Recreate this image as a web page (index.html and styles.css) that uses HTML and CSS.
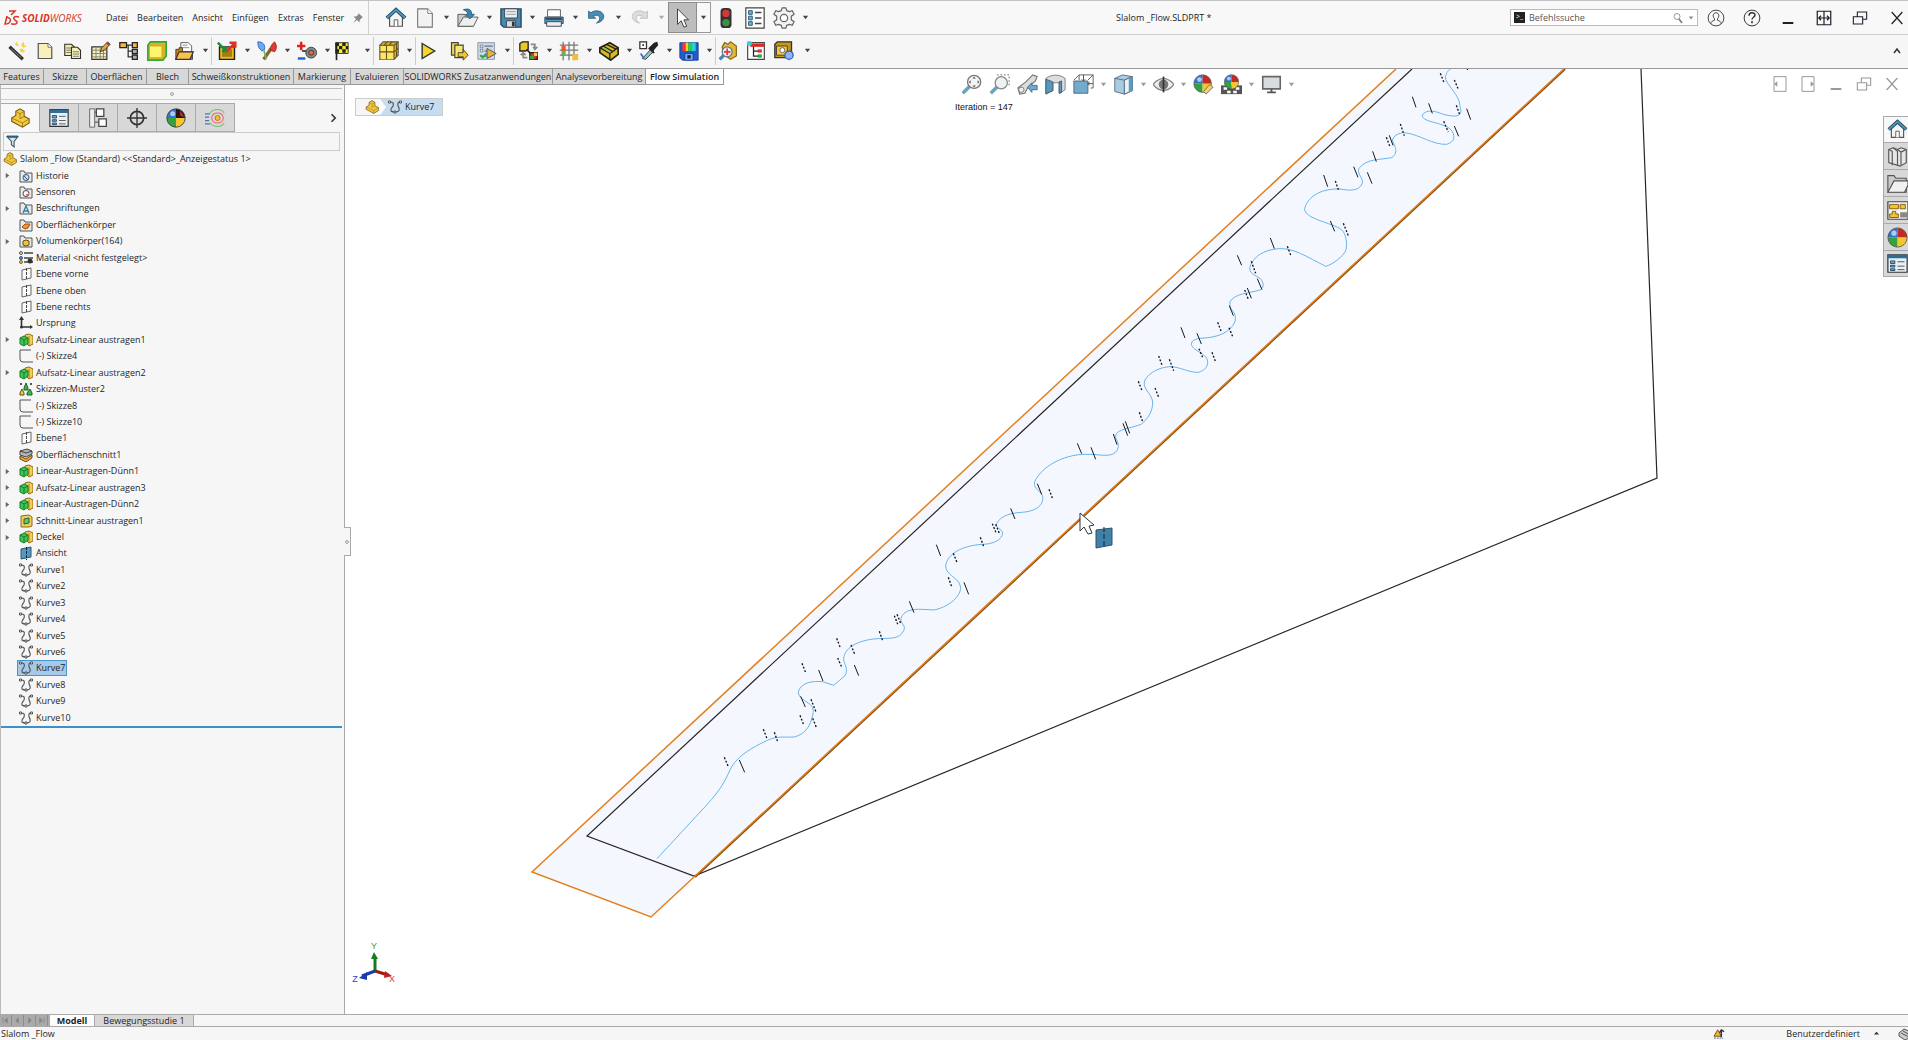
FILE: index.html
```html
<!DOCTYPE html>
<html lang="de">
<head>
<meta charset="utf-8">
<title>Slalom _Flow.SLDPRT *</title>
<link rel="stylesheet" href="styles.css">
</head>
<body>
<svg class="sprite" aria-hidden="true">
  <symbol id="arrow" viewBox="0 0 8 8"><path d="M1 2h6l-3 4z" fill="currentColor"/></symbol>
  <symbol id="home" viewBox="0 0 24 24"><path d="M5 11v10h14V11l-7-7z" fill="#f4f4f4" stroke="#555" stroke-width="1.3"/><path d="M10 21v-7h4v7" fill="#fff" stroke="#555"/><path d="M2 12 12 3l10 9" fill="none" stroke="#1d4763" stroke-width="4"/><path d="M2 12 12 3l10 9" fill="none" stroke="#5294ba" stroke-width="2"/></symbol>
  <symbol id="page" viewBox="0 0 24 24"><path d="M4 2h11l5 5v15H4z" fill="#f3f3f3" stroke="#777" stroke-width="1.2"/><path d="M15 2v5h5" fill="#fff" stroke="#777"/></symbol>
  <symbol id="open" viewBox="0 0 24 24"><path d="M1 21V8h7l2 3h7v10z" fill="#ccc" stroke="#555"/><path d="m1 21 6-10h16l-5 10z" fill="#eee" stroke="#555"/><path d="M7 3c6-2 9 0 9 5h3l-5 5-5-5h3c0-2-2-4-5-5z" fill="#3f86ae" stroke="#245a7c"/></symbol>
  <symbol id="save" viewBox="0 0 24 24"><path d="M1 2h22v20H4l-3-3z" fill="#4889ae" stroke="#2b4a5d" stroke-width="1.5"/><path d="M5 2h14v10H5z" fill="#eee" stroke="#345"/><path d="M7 5h10M7 8h10" stroke="#999"/><path d="M7 15h10v7H7z" fill="#ddd" stroke="#345"/><path d="M13 16h3v5h-3z" fill="#333"/></symbol>
  <symbol id="print" viewBox="0 0 24 24"><path d="M5 3h14v8H5z" fill="#fff" stroke="#555"/><path d="M2 11h20v7H2z" fill="#5a9bc0" stroke="#345"/><path d="M4 16h16v5H4z" fill="#eee" stroke="#345"/><path d="M3 13h18" stroke="#234" stroke-width="1.5"/></symbol>
  <symbol id="undo" viewBox="0 0 24 24"><path d="M2 4v9h9L8 10c5-2 9 0 8 4-1 3-3 4-4 5 6-1 10-5 9-10C19 3 10 2 5 6z" fill="#4a8db3" stroke="#28597a"/></symbol>
  <symbol id="redo" viewBox="0 0 24 24"><path d="M22 4v9h-9l3-3c-5-2-9 0-8 4 1 3 3 4 4 5-6-1-10-5-9-10C5 3 14 2 19 6z" fill="#ddd" stroke="#bbb"/></symbol>
  <symbol id="pointer" viewBox="0 0 24 24"><path d="M6 2v17l4-4 3 7 3-1-3-7h5z" fill="#fff" stroke="#333"/></symbol>
  <symbol id="traffic" viewBox="0 0 24 24"><rect x="6" y="1" width="12" height="22" rx="4" fill="#333"/><circle cx="12" cy="7" r="4" fill="#d33a33"/><circle cx="12" cy="17" r="4" fill="#3a9146"/></symbol>
  <symbol id="options" viewBox="0 0 24 24"><path d="M2 1h20v22H2z" fill="#fff" stroke="#444" stroke-width="1.3"/><path d="M5 4h4v4H5zM5 10h4v4H5zM5 16h4v4H5z" fill="#7db4d5" stroke="#1f526f"/><path d="M12 6h7M12 12h7M12 18h7" stroke="#444" stroke-width="1.5"/></symbol>
  <symbol id="gear" viewBox="0 0 24 24"><path d="m10 1h4l1 3 3 1 3-1 2 4-3 2v4l3 2-2 4-3-1-3 1-1 3h-4l-1-3-3-1-3 1-2-4 3-2v-4L1 8l2-4 3 1 3-1z" fill="#f2f2f2" stroke="#666" stroke-width="1.3"/><circle cx="12" cy="12" r="4" fill="#fff" stroke="#666" stroke-width="1.3"/></symbol>
  <symbol id="pin" viewBox="0 0 24 24"><path d="m13 2 9 9-3 1-4 5v4l-5-5-8 6 6-8-5-5h5l5-4z" fill="#888"/></symbol>
  <symbol id="user" viewBox="0 0 24 24"><circle cx="12" cy="12" r="10.500" fill="none" stroke="#444" stroke-width="1.3"/><path d="M5 20c0-4 3-4 5-5v-2c-3-3-2-8 2-8s5 5 2 8v2c2 1 5 1 5 5" fill="none" stroke="#444" stroke-width="1.300"/></symbol>
  <symbol id="help" viewBox="0 0 24 24"><circle cx="12" cy="12" r="10.500" fill="none" stroke="#333" stroke-width="1.300"/><path d="M8 9c0-5 8-5 8-1 0 3-4 3-4 6" fill="none" stroke="#333" stroke-width="2"/><path d="M11 16h2v3h-2z" fill="#333"/></symbol>
  <symbol id="min" viewBox="0 0 24 24"><path d="M4 18h16v3H4z" fill="currentColor"/></symbol>
  <symbol id="span" viewBox="0 0 24 24"><path d="M3 3h18v18H3zM12 3v18M5 12h14M8 9l-3 3 3 3M16 9l3 3-3 3" fill="none" stroke="currentColor" stroke-width="1.600"/></symbol>
  <symbol id="restore" viewBox="0 0 24 24"><path d="M2 10h14v11H2zM8 10V3h14v11h-6" fill="none" stroke="currentColor" stroke-width="1.600"/></symbol>
  <symbol id="close" viewBox="0 0 24 24"><path d="m4 3 16 18M20 3 4 21" fill="none" stroke="currentColor" stroke-width="1.800"/></symbol>
  <symbol id="pane-l" viewBox="0 0 24 24"><path d="M3 1h18v22H3z" fill="none" stroke="currentColor" stroke-width="1.500"/><path d="M8 8v8l-5-4z" fill="currentColor"/></symbol>
  <symbol id="pane-r" viewBox="0 0 24 24"><path d="M3 1h18v22H3z" fill="none" stroke="currentColor" stroke-width="1.500"/><path d="M16 8v8l5-4z" fill="currentColor"/></symbol>
  <symbol id="lens" viewBox="0 0 24 24"><circle cx="10" cy="9" r="6" fill="none" stroke="#777" stroke-width="1.500"/><path d="m14 14 6 8" stroke="#777" stroke-width="3"/></symbol>

  <symbol id="wand" viewBox="0 0 24 24"><path d="m3 7 16 15" stroke="#333" stroke-width="4"/><path d="m5 9 12 11" stroke="#888"/><path d="m10 3 2-2 1 3 2 1-3 1-2-1zM17 4l3-3 1 4 3 1-4 2-2-1zM15 10l3-1 4 3-3 2-3-1z" fill="#f0d64e"/></symbol>
  <symbol id="ypage" viewBox="0 0 24 24"><path d="M3 2h13l5 5v15H3z" fill="#f7f2bc" stroke="#555" stroke-width="1.600"/><path d="M16 2v5h5" fill="#fff" stroke="#555"/></symbol>
  <symbol id="copy" viewBox="0 0 24 24"><path d="M1 3h9l4 4v11H1z" fill="#f4eba8" stroke="#333" stroke-width="1.500"/><path d="M3 8h7M3 11h7M3 14h7" stroke="#555"/><path d="M10 7h8l4 4v11H10z" fill="#f7f2bc" stroke="#333" stroke-width="1.500"/><path d="M12 13h8M12 16h8M12 19h8" stroke="#555"/></symbol>
  <symbol id="tablepen" viewBox="0 0 24 24"><path d="M1 7h18v15H1z" fill="#f5eeb8" stroke="#333" stroke-width="1.500"/><path d="M1 11h18M1 15h18M1 19h18M6 8v14M11 8v14M15 8v14" stroke="#777"/><path d="m11 13 2-5 7-7 3 3-7 7z" fill="#e5a53c" stroke="#333"/><path d="m18 3 3 3 2-2-3-3z" fill="#a44"/></symbol>
  <symbol id="ftree" viewBox="0 0 24 24"><path d="M6 5h12M11 5v14h6M11 12h6" fill="none" stroke="#333" stroke-width="1.500"/><path d="M1 2h8v6H1z" fill="#f6b73a" stroke="#222" stroke-width="1.500"/><path d="M16 2h6v6h-6z" fill="#f6b73a" stroke="#222" stroke-width="1.500"/><path d="M16 10h6v5h-6zM16 17h6v5h-6z" fill="#aaa" stroke="#222" stroke-width="1.500"/></symbol>
  <symbol id="domain" viewBox="0 0 24 24"><path d="M1 5 4 1h19v17l-4 5H1z" fill="#d8b526" stroke="#2fa83f" stroke-width="2"/><path d="M3 6h15v14H3z" fill="#fdf46d" stroke="#d1a11e"/></symbol>
  <symbol id="yopen" viewBox="0 0 24 24"><path d="M7 2h9l4 4v8H7z" fill="#fff" stroke="#444"/><path d="M1 22V10h4v-2h4v5h12v9z" fill="#c77f18" stroke="#333"/><path d="m1 22 4-9h17l-4 9z" fill="#fac24b" stroke="#333" stroke-width="1.400"/><path d="M9 5h6M9 8h8" stroke="#777"/></symbol>
  <symbol id="bound" viewBox="0 0 24 24"><path d="M3 7h18v15H3z" fill="#eeb921" stroke="#222" stroke-width="1.700"/><path d="M6 10h12v9H6z" fill="#a57d10"/><path d="m1 2 9 9m-4 1h5V7" fill="none" stroke="#228a38" stroke-width="3"/><path d="m12 12 9-9m-6-1h7v6" fill="none" stroke="#dc3228" stroke-width="3"/></symbol>
  <symbol id="brushes" viewBox="0 0 24 24"><path d="M1 1c6 0 9 3 8 9l-3 2C2 9 1 6 1 1z" fill="#69aaf2" stroke="#2662b5"/><path d="m8 22 9-13" stroke="#7b6a25" stroke-width="4"/><path d="M16 11c-1-4 3-8 5-10 3 4 3 9 0 12z" fill="#e53a30" stroke="#922"/><path d="m8 10 3 12" stroke="#7a7" stroke-width="2"/></symbol>
  <symbol id="goal" viewBox="0 0 24 24"><path d="M5 1v10M0 6h10" stroke="#d22" stroke-width="3"/><path d="M1 21h9" stroke="#26c" stroke-width="3"/><path d="M6 12h8" stroke="#333" stroke-width="2"/><circle cx="17" cy="14" r="6.500" fill="#888" stroke="#333"/><circle cx="17" cy="14" r="3" fill="#f0623b" stroke="#333"/></symbol>
  <symbol id="flag" viewBox="0 0 24 24"><path d="M2 2h15v13H2z" fill="#f6eb36" stroke="#222"/><path d="M2 2h4v4H2zM10 2h4v4h-4zM6 6h4v4H6zM14 6h3v4h-3zM2 10h4v4H2zM10 10h4v4h-4z" fill="#222"/><path d="M3 2v21" stroke="#222" stroke-width="2"/></symbol>
  <symbol id="mesh" viewBox="0 0 24 24"><path d="M1 5 5 1h18v16l-5 5H1z" fill="#e2b52c" stroke="#555" stroke-width="1.300"/><path d="M2 6h16v16H2z" fill="#fbe667"/><path d="M1 5h17v17M18 5l5-4M9 5v17M1 13h17M18 13l5-4M10 1 6 5M16 1l-4 4M21 3v16" fill="none" stroke="#665014" stroke-width="1.300"/></symbol>
  <symbol id="play" viewBox="0 0 24 24"><path d="m5 3 15 9-15 9z" fill="#f3d629" stroke="#333" stroke-width="1.700"/></symbol>
  <symbol id="batch" viewBox="0 0 24 24"><path d="M3 2h8v15H3z" fill="#f1d849" stroke="#444" stroke-width="1.400"/><path d="M7 5h10v15H7z" fill="#f7e774" stroke="#444" stroke-width="1.400"/><path d="m11 14h6v-4l6 7-6 6v-4h-6z" fill="#f4c628" stroke="#333"/></symbol>
  <symbol id="solve" viewBox="0 0 24 24"><path d="M1 2h20v20H1z" fill="#c8dae8" stroke="#889"/><path d="M4 5h3v3H4zM4 10h3v3H4z" fill="#fff" stroke="#678"/><path d="M9 6h10M9 12h5M4 18h12" stroke="#678" stroke-width="1.500"/><path d="m4 17 3 3 4-5" stroke="#2a3" stroke-width="2" fill="none"/><path d="m12 9 11 6-11 6z" fill="#e5b43c" stroke="#444"/></symbol>
  <symbol id="convert" viewBox="0 0 24 24"><path d="M1 3 4 1h7v9l-3 2H1z" fill="#eac62a" stroke="#222" stroke-width="1.600"/><path d="M13 14h9v8h-9z" fill="#d33" stroke="#222" stroke-width="1.600"/><path d="M13 18h5v4h-5z" fill="#3a3"/><path d="M18 14h4v4h-4z" fill="#fc3"/><path d="M14 4h5v5m-2-2 2 3 3-3M10 20H5v-5m-3 2 3-3 3 3" fill="none" stroke="#888" stroke-width="2"/><path d="m9 10 5 5" stroke="#222" stroke-width="2"/></symbol>
  <symbol id="plotgrid" viewBox="0 0 24 24"><path d="M1 5h22M1 11h22M1 17h22M5 1v22M12 1v22M18 1v22" stroke="#777" stroke-width="1.500"/><path d="M3 6h5v6H3z" fill="#e55b2c"/><path d="M3 12h5v5H3z" fill="#62b84a"/><path d="M16 16h7v7h-7z" fill="#f5bf30"/></symbol>
  <symbol id="results" viewBox="0 0 24 24"><path d="m1 8 12-6 10 6v8l-9 7-13-9z" fill="#ddb91f" stroke="#222" stroke-width="2"/><path d="m1 8 12 7 10-7M13 15v7M5 6l12 7M9 4l12 6" fill="none" stroke="#222" stroke-width="1.600"/><path d="m5 9 8 5 2-1-8-5z" fill="#93c840"/></symbol>
  <symbol id="probe" viewBox="0 0 24 24"><path d="M1 1h8v8H1z" fill="#fff" stroke="#333" stroke-width="1.500"/><path d="M4 4h2v2H4z" fill="#333"/><path d="m4 21 11-12 3 3L8 22z" fill="#80c6c5" stroke="#333"/><path d="m13 7 5-5 4-1 1 4-6 7 2 2-2 1-6-6z" fill="#222"/><path d="m2 15 4 6" stroke="#36c" stroke-width="2"/></symbol>
  <symbol id="rainbow" viewBox="0 0 24 24"><path d="M1 2h22v21H4l-3-3z" fill="#215ccb" stroke="#123d93"/><path d="M4 2h4v10H4z" fill="#f33"/><path d="M8 2h3v10H8z" fill="#fc2"/><path d="M11 2h4v10h-4z" fill="#3c4"/><path d="M15 2h5v10h-5z" fill="#2bd3d0"/><path d="M7 15h10v8H7z" fill="#7aa7ee" stroke="#123d93"/><path d="M10 17h4v4h-4z" fill="#124"/></symbol>
  <symbol id="magbox" viewBox="0 0 24 24"><path d="m5 7 3-5 4 2 3-3 7 5v12l-7 4-8-6z" fill="#e8ba34" stroke="#8a6716" stroke-width="1.500"/><path d="m2 22 6-6" stroke="#4b84b8" stroke-width="4"/><circle cx="11" cy="13" r="6" fill="#e5eef6" stroke="#678" stroke-width="1.500"/><path d="M11 9v8M7 13h8" stroke="#e33" stroke-width="2"/></symbol>
  <symbol id="redtree" viewBox="0 0 24 24"><path d="M2 2h20v20H2z" fill="#fff" stroke="#444" stroke-width="1.400"/><path d="M5 3h17v4H5z" fill="#d62a20"/><path d="M9 7v11h6M9 12h6" fill="none" stroke="#222" stroke-width="1.500"/><path d="M14 10h5v4h-5z" fill="#d33"/><path d="M14 16h5v4h-5z" fill="#2a4"/><circle cx="4" cy="3" r="3" fill="#36cfe0"/></symbol>
  <symbol id="boxlens" viewBox="0 0 24 24"><path d="M1 4 4 1h17v15l-3 4H1z" fill="#c99718" stroke="#333" stroke-width="1.600"/><path d="M3 6h13v11H3z" fill="#f2cb3c" stroke="#333"/><circle cx="10" cy="11" r="3" fill="#fff" stroke="#555"/><circle cx="18" cy="17" r="5" fill="#8fb3f5" stroke="#2b5fc4" stroke-width="1.500"/></symbol>

  <symbol id="part" viewBox="0 0 24 24"><path d="m2 12 5-3 0-5 5-3 5 3v6l6 3v5l-8 5-13-7z" fill="#f3cb40" stroke="#7b5b12" stroke-width="1.300"/><path d="m2 12 13 6v5m0-5 8-5M7 4l5 3v6l5-3M12 7l5-3" fill="none" stroke="#9a7418"/></symbol>
  <symbol id="props" viewBox="0 0 24 24"><path d="M1 2h22v20H1z" fill="#e8f0f5" stroke="#333" stroke-width="1.400"/><path d="M1 2h22v4H1z" fill="#2f6d94"/><path d="M4 9h5v3H4zM4 14h5v2H4zM4 18h5v2H4z" fill="#69a9cf" stroke="#246" /><path d="M12 10h8M12 15h8M12 19h8" stroke="#444"/></symbol>
  <symbol id="config" viewBox="0 0 24 24"><path d="M8 5h4M8 17h6" fill="none" stroke="#666" stroke-width="1.500"/><path d="M2 1h6v22H2z" fill="#eee" stroke="#555"/><path d="M10 1h9v9h-9zM13 13h9v9h-9z" fill="#fff" stroke="#444" stroke-width="1.500"/></symbol>
  <symbol id="target" viewBox="0 0 24 24"><circle cx="12" cy="12" r="8" fill="none" stroke="#333" stroke-width="2"/><path d="M12 0v24M0 12h24" stroke="#333" stroke-width="1.600"/></symbol>
  <symbol id="ball" viewBox="0 0 24 24"><path d="M12 1A11 11 0 0 0 1 12h11z" fill="#3474c8"/><path d="M12 1a11 11 0 0 1 11 11H12z" fill="#c52b26"/><path d="M1 12a11 11 0 0 0 11 11V12z" fill="#35a23f"/><path d="M12 23a11 11 0 0 0 11-11H12z" fill="#f3c734"/><circle cx="8" cy="7" r="3" fill="#cbe2fb" opacity=".8"/><circle cx="12" cy="12" r="11" fill="none" stroke="#444" stroke-width=".8"/></symbol>
  <symbol id="darkball" viewBox="0 0 24 24"><path d="M12 1A11 11 0 0 0 1 12h11z" fill="#3474c8"/><path d="M12 1a11 11 0 0 1 11 11H12z" fill="#26161a"/><path d="M17 3l5 8-5-2z" fill="#c33"/><path d="M1 12a11 11 0 0 0 11 11V12z" fill="#35a23f"/><path d="M12 23a11 11 0 0 0 11-11H12z" fill="#f3c734"/><circle cx="8" cy="7" r="3" fill="#cbe2fb" opacity=".8"/><circle cx="12" cy="12" r="11" fill="none" stroke="#333"/></symbol>
  <symbol id="flow" viewBox="0 0 24 24"><path d="M0 7h6M0 11h5M0 15h5M0 19h6" stroke="#47b" stroke-width="1.500"/><path d="M8 12c1-8 13-8 14 0-1 8-13 8-14 0z" fill="none" stroke="#e66" stroke-width="1.300"/><path d="M6 6c5-6 14-5 17 0M6 18c5 6 14 5 17 0" fill="none" stroke="#7b7" stroke-width="1.300"/><circle cx="15" cy="12" r="3" fill="#f5c226" stroke="#a62"/></symbol>
  <symbol id="filter" viewBox="0 0 24 24"><path d="M2 3h20l-7 9v10l-5-4v-6z" fill="#d4e5ef" stroke="#456" stroke-width="2"/><path d="M2 3h20" stroke="#28617f" stroke-width="4"/></symbol>

  <symbol id="zoomfit" viewBox="0 0 24 24"><path d="m2 22 8-8" stroke="#6aa2c2" stroke-width="4"/><circle cx="15" cy="9" r="7.500" fill="#f4f4f4" stroke="#777" stroke-width="1.500"/><path d="m15 3 2 2h-4zM15 15l2-2h-4zM9 9l2-2v4zM21 9l-2-2v4z" fill="#555"/></symbol>
  <symbol id="zoomarea" viewBox="0 0 24 24"><path d="M9 1h14v13" fill="none" stroke="#666" stroke-dasharray="2 2"/><path d="m2 22 8-8" stroke="#6aa2c2" stroke-width="4"/><circle cx="14" cy="10" r="7" fill="#edf2f5" stroke="#888" stroke-width="1.500"/></symbol>
  <symbol id="prevview" viewBox="0 0 24 24"><path d="m1 16 9-7 8-8 5 2-2 5-9 8-3 6-6 1z" fill="#ddd" stroke="#777" stroke-width="1.300"/><circle cx="5" cy="18" r="3" fill="#eee" stroke="#777"/><path d="m12 15 5-5v3h6v5h-6v3z" fill="#70a9ce" stroke="#468"/></symbol>
  <symbol id="section" viewBox="0 0 24 24"><path d="M1 5c7-5 15-5 22 0v13l-6 4V10H9v9l-8 3z" fill="#ddd" stroke="#777"/><path d="m1 6 8 3v10l-8 4zM16 9l3-1v13l-3 1z" fill="#5797bd" stroke="#456"/></symbol>
  <symbol id="orient" viewBox="0 0 24 24"><path d="M7 1h16v15h-3M23 1l-6 6M7 1v6M7 1 1 7" fill="none" stroke="#555"/><path d="M1 8h16v14H1z" fill="#72abce" stroke="#467"/><path d="M12 1v7m-2-2 2 2 2-2M23 11h-6m2-2-2 2 2 2" fill="none" stroke="#444"/></symbol>
  <symbol id="display" viewBox="0 0 24 24"><path d="m2 5 9-4 11 2v16l-9 4-11-3z" fill="#a9cce2" stroke="#567"/><path d="m2 5 11 2 9-4M13 7v16" fill="none" stroke="#567"/><path d="M13 7 22 3v16l-9 4z" fill="#e7f2f9" stroke="#567"/><path d="m18 5 4-2v16l-4 2z" fill="#5d9cc2"/></symbol>
  <symbol id="eye" viewBox="0 0 24 24"><path d="M0 12c7-9 17-9 24 0-7 9-17 9-24 0z" fill="#eee" stroke="#888" stroke-width="1.500"/><circle cx="12" cy="12" r="5.500" fill="#777"/><path d="M12 3v18" stroke="#333" stroke-width="2"/></symbol>
  <symbol id="appear" viewBox="0 0 24 24"><use href="#ball" width="22" height="22"/><path d="m12 20 7-8 4 3-8 8z" fill="#ecd086" stroke="#765"/></symbol>
  <symbol id="scene" viewBox="0 0 24 24"><path d="M0 13h24v10H0z" fill="#555"/><path d="M3 15h4v3H3zM17 15h4v3h-4zM7 19h4v3H7zM14 19h4v3h-4z" fill="#fff"/><use href="#ball" x="3" width="18" height="18"/></symbol>
  <symbol id="screen" viewBox="0 0 24 24"><path d="M2 3h20v14H2z" fill="#d8dcde" stroke="#666" stroke-width="1.800"/><path d="M11 17h2v4h-2zM7 20h10v2H7z" fill="#555"/></symbol>

  <symbol id="books" viewBox="0 0 24 24"><path d="m2 4 5-2 5 2 4-2 6 2v15l-7 4-13-4z" fill="#e6e6e6" stroke="#555" stroke-width="1.300"/><path d="m2 4 4 2v16M7 2l5 4v16M12 4l4 3v15M16 7l6-3" fill="none" stroke="#555" stroke-width="1.300"/></symbol>
  <symbol id="folder" viewBox="0 0 24 24"><path d="M1 22V3h7l2 3h12v16z" fill="#ccc" stroke="#555" stroke-width="1.300"/><path d="m1 22 7-13h16v5l-4 8z" fill="#f1f1f1" stroke="#555" stroke-width="1.300"/></symbol>
  <symbol id="palette" viewBox="0 0 24 24"><path d="M1 2h23v20H1z" fill="#f4f4f4" stroke="#444" stroke-width="1.400"/><path d="M3 5h10v5H3zM15 5h6v5h-6zM6 13h4v3h3v4H3v-4h3z" fill="#f2c52d" stroke="#765512"/><path d="M15 14h9v6h-9z" fill="#888"/></symbol>

  <symbol id="t-folder" viewBox="0 0 14 14"><path d="M1 13V2h4l1 2h7v9z" fill="#e8eaeb" stroke="#555"/></symbol>
  <symbol id="t-history" viewBox="0 0 14 14"><use href="#t-folder"/><circle cx="7" cy="8.500" r="3" fill="#cfe3ef" stroke="#357"/><path d="m5 7 4 4" stroke="#357"/></symbol>
  <symbol id="t-sensor" viewBox="0 0 14 14"><use href="#t-folder"/><circle cx="7" cy="8.500" r="3" fill="#fff" stroke="#444"/><path d="M7 9h3l-2 3z" fill="#e54"/></symbol>
  <symbol id="t-note" viewBox="0 0 14 14"><use href="#t-folder"/><path d="m4 12 3-7 3 7M5 10h4" fill="none" stroke="#3a7ca4" stroke-width="1.300"/></symbol>
  <symbol id="t-surf" viewBox="0 0 14 14"><use href="#t-folder"/><path d="m3 9 3-3h5l-2 4-3 1z" fill="#f29134" stroke="#a4520e"/></symbol>
  <symbol id="t-solid" viewBox="0 0 14 14"><use href="#t-folder"/><path d="m4 7 3-1 3 1v4l-3 1-3-1z" fill="#f0c537" stroke="#664d12"/></symbol>
  <symbol id="t-mat" viewBox="0 0 14 14"><path d="M5 2h9M5 7h9M5 11h9" stroke="#444" stroke-width="1.500"/><circle cx="2" cy="2" r="1.500" fill="#ddd" stroke="#555"/><circle cx="2" cy="7" r="1.500" fill="#4b9bd0" stroke="#357"/><circle cx="2" cy="11" r="1.500" fill="#edc33b" stroke="#763"/><circle cx="11" cy="10" r="2.500" fill="#333"/></symbol>
  <symbol id="t-plane" viewBox="0 0 14 14"><path d="m3 3 9-2v10l-9 2z" fill="#fafafa" stroke="#666"/><path d="M7.500 1v12" stroke="#444" stroke-dasharray="3 1"/></symbol>
  <symbol id="t-plane-on" viewBox="0 0 14 14"><path d="m2 3 10-2v10L2 13z" fill="#5796bd" stroke="#285a78"/><path d="M7.500 1v13" stroke="#123" stroke-dasharray="3 1"/></symbol>
  <symbol id="t-origin" viewBox="0 0 14 14"><path d="M2.500 2v9H12" fill="none" stroke="#333" stroke-width="1.600"/><path d="m0 4 2.500-4L5 4zM11 9l3 2-3 2z" fill="#333"/><circle cx="2.500" cy="11" r="1.500" fill="#333"/></symbol>
  <symbol id="t-boss" viewBox="0 0 14 14"><path d="m6 2 4-1 4 2v8l-4 2-3-3z" fill="#f2cf58" stroke="#8c6a1c"/><path d="M10 3v9" stroke="#a57e20"/><path d="m1 5 4-2 4 2v5l-4 3-4-2z" fill="#3cc852" stroke="#1b7a2b"/><path d="m1 5 4 2 4-2M5 7v5" fill="none" stroke="#1b7a2b"/></symbol>
  <symbol id="t-cut" viewBox="0 0 14 14"><path d="m2 2 8-1 3 2v9l-3 1H2z" fill="#f2cf58" stroke="#8c6a1c"/><path d="m5 5 5-1v5l-5 1z" fill="#65c56c" stroke="#276331"/></symbol>
  <symbol id="t-sketch" viewBox="0 0 14 14"><path d="M12 1H1v9q0 3 3 3h10" fill="none" stroke="#555"/></symbol>
  <symbol id="t-pattern" viewBox="0 0 14 14"><path d="M5 6 7 1l2 5v2H5zM8 13v-2l3-4 2 4v2z" fill="#3ab44b" stroke="#1c6427"/><path d="M1 13v-2l2-4 2 4v2z" fill="#f0cf46" stroke="#5a4d14"/><path d="M1 2h2M11 2h2" stroke="#555" stroke-width="2"/></symbol>
  <symbol id="t-surfcut" viewBox="0 0 14 14"><path d="m1 8 6 3 6-4v3l-6 4-6-3z" fill="#f2a53a" stroke="#6e4410"/><path d="m1 3 7-2 5 2v3l-6 3-6-2z" fill="#b4b4b4" stroke="#444"/><path d="m1 3 6 2 6-2" fill="none" stroke="#444"/></symbol>
  <symbol id="t-curve" viewBox="0 0 14 14"><path d="M2 2c3 0 4 1 3 4-1 2-3 3-2 5 1 1 2 1 4 1 3 0 5-1 4-4-1-2-2-5 0-6h2" fill="none" stroke="#555" stroke-width="1.200"/><path d="M.5 1h2v2h-2zM11.500 1h2v2h-2zM6 11h2v2H6z" fill="#fff" stroke="#555"/></symbol>
  <symbol id="t-exp" viewBox="0 0 8 8"><path d="m2 1 4 3-4 3z" fill="#666"/></symbol>
  <symbol id="warn" viewBox="0 0 14 12"><path d="m1 9 4-7 4 7z" fill="#f4b82c" stroke="#774b0a"/><path d="M9 10V3m-2 2 2-3 3 2" fill="none" stroke="#333" stroke-width="1.500"/><path d="M1 11h10" stroke="#36a" stroke-dasharray="2 1"/></symbol>
</svg>

<header class="titlebar">
  <div class="logo">
    <svg viewBox="0 0 16 16" aria-hidden="true"><g fill="none" stroke="#d9352a" stroke-width="1.500"><path d="M5 1h6L7 5"/><path d="m3 6-2 8c6 0 8-6 1-7M15 7c-4-1-6 0-5 2s4 2 3 4-4 1-6 1"/></g></svg>
    <span><b>SOLID</b>WORKS</span>
  </div>
  <nav class="menus">
    <button>Datei</button><button>Bearbeiten</button><button>Ansicht</button><button>Einfügen</button><button>Extras</button><button>Fenster</button>
  </nav>
  <button class="pin" aria-label="Anheften"><svg><use href="#pin"/></svg></button>
  <div class="quick">
    <button aria-label="Start"><svg><use href="#home"/></svg></button>
    <button aria-label="Neu"><svg><use href="#page"/></svg></button><button class="drop" aria-label="Mehr"><svg><use href="#arrow"/></svg></button>
    <button aria-label="Öffnen"><svg><use href="#open"/></svg></button><button class="drop" aria-label="Mehr"><svg><use href="#arrow"/></svg></button>
    <button aria-label="Speichern"><svg><use href="#save"/></svg></button><button class="drop" aria-label="Mehr"><svg><use href="#arrow"/></svg></button>
    <button aria-label="Drucken"><svg><use href="#print"/></svg></button><button class="drop" aria-label="Mehr"><svg><use href="#arrow"/></svg></button>
    <button aria-label="Rückgängig"><svg class="small"><use href="#undo"/></svg></button><button class="drop" aria-label="Mehr"><svg><use href="#arrow"/></svg></button>
    <button aria-label="Wiederholen"><svg class="small"><use href="#redo"/></svg></button><button class="drop off" aria-label="Mehr"><svg><use href="#arrow"/></svg></button>
    <button class="pressed" aria-label="Auswählen"><svg><use href="#pointer"/></svg></button><button class="drop boxed" aria-label="Mehr"><svg><use href="#arrow"/></svg></button>
    <button aria-label="Neu aufbauen"><svg><use href="#traffic"/></svg></button>
    <button aria-label="Dateieigenschaften"><svg><use href="#options"/></svg></button>
    <button aria-label="Optionen"><svg><use href="#gear"/></svg></button><button class="drop" aria-label="Mehr"><svg><use href="#arrow"/></svg></button>
  </div>
  <h1 class="doc-title">Slalom _Flow.SLDPRT *</h1>
  <div class="title-right">
    <label class="search"><span class="prompt">&gt;_</span><input type="text" placeholder="Befehlssuche" aria-label="Befehlssuche"><svg><use href="#lens"/></svg><svg class="tiny"><use href="#arrow"/></svg></label>
    <button aria-label="Anmelden"><svg><use href="#user"/></svg></button>
    <button aria-label="Hilfe"><svg><use href="#help"/></svg></button>
    <button aria-label="Minimieren"><svg class="small"><use href="#min"/></svg></button>
    <button aria-label="Spannen"><svg><use href="#span"/></svg></button>
    <button aria-label="Wiederherstellen"><svg class="small"><use href="#restore"/></svg></button>
    <button aria-label="Schließen"><svg class="small"><use href="#close"/></svg></button>
  </div>
</header>

<div class="toolbar">
  <button aria-label="Assistent"><svg><use href="#wand"/></svg></button>
  <button aria-label="Neu"><svg class="small"><use href="#ypage"/></svg></button>
  <button aria-label="Projekt klonen"><svg class="small"><use href="#copy"/></svg></button>
  <button aria-label="Allgemeine Einstellungen"><svg><use href="#tablepen"/></svg></button>
  <button aria-label="Baum"><svg><use href="#ftree"/></svg></button>
  <button aria-label="Rechenraum"><svg><use href="#domain"/></svg></button>
  <button aria-label="Projekt laden"><svg><use href="#yopen"/></svg></button><button class="drop" aria-label="Mehr"><svg><use href="#arrow"/></svg></button>
  <i class="sep"></i>
  <button aria-label="Randbedingung"><svg><use href="#bound"/></svg></button><button class="drop" aria-label="Mehr"><svg><use href="#arrow"/></svg></button>
  <button aria-label="Quellen"><svg><use href="#brushes"/></svg></button><button class="drop" aria-label="Mehr"><svg><use href="#arrow"/></svg></button>
  <button aria-label="Bedingungen"><svg><use href="#goal"/></svg></button><button class="drop" aria-label="Mehr"><svg><use href="#arrow"/></svg></button>
  <button class="start" aria-label="Ziele"><svg><use href="#flag"/></svg></button><button class="drop" aria-label="Mehr"><svg><use href="#arrow"/></svg></button>
  <i class="sep"></i>
  <button aria-label="Netz"><svg><use href="#mesh"/></svg></button><button class="drop" aria-label="Mehr"><svg><use href="#arrow"/></svg></button>
  <i class="sep"></i>
  <button class="start" aria-label="Ausführen"><svg><use href="#play"/></svg></button>
  <button aria-label="Stapellauf"><svg><use href="#batch"/></svg></button>
  <button aria-label="Löser"><svg><use href="#solve"/></svg></button><button class="drop" aria-label="Mehr"><svg><use href="#arrow"/></svg></button>
  <i class="sep"></i>
  <button aria-label="Ergebnisse laden"><svg><use href="#convert"/></svg></button><button class="drop" aria-label="Mehr"><svg><use href="#arrow"/></svg></button>
  <button aria-label="Schnittbild"><svg><use href="#plotgrid"/></svg></button><button class="drop" aria-label="Mehr"><svg><use href="#arrow"/></svg></button>
  <button aria-label="Oberflächenbild"><svg><use href="#results"/></svg></button><button class="drop" aria-label="Mehr"><svg><use href="#arrow"/></svg></button>
  <button aria-label="Prüfen"><svg><use href="#probe"/></svg></button><button class="drop" aria-label="Mehr"><svg><use href="#arrow"/></svg></button>
  <button aria-label="Ergebnis speichern"><svg><use href="#rainbow"/></svg></button><button class="drop" aria-label="Mehr"><svg><use href="#arrow"/></svg></button>
  <i class="sep"></i>
  <button class="start" aria-label="Geometrie prüfen"><svg><use href="#magbox"/></svg></button>
  <button class="start" aria-label="Leckverfolgung"><svg><use href="#redtree"/></svg></button>
  <button class="start" aria-label="Anzeige"><svg><use href="#boxlens"/></svg></button><button class="drop" aria-label="Mehr"><svg><use href="#arrow"/></svg></button>
  <button class="collapse" aria-label="Einklappen"><svg viewBox="0 0 8 8"><path d="m1 6 3-4 3 4" fill="none" stroke="#333" stroke-width="1.500"/></svg></button>
</div>

<main class="workspace">
  <svg class="model" role="img" aria-label="Slalom-Strecke">
    <g transform="translate(0 -69)">
      <path class="face" d="M1396 69 532 872l119 45 913-848z"/>
      <path class="edge" d="m1412 69-825 767 107 40 963-398-16-409"/>
      <path class="edge under" d="M695 877 1565 69"/>
      <path class="hot" d="M1396 69 532 872l119 45 913-848"/>
      <g transform="translate(520 570) scale(.33333)">
        <path class="curve" d="M411 866 560 705C600 660 612 640 630 600c15-30 40-55 112-89 33-15 58-8 81-10 32-9 45-31 51-51 8-25 8-35-2-45-17-15-37-20-37-40 10-30 45-32 73-30l33 11 34-29c10-17 0-32-4-47-1-30 29-55 89-63 40-4 70 3 86-17 19-25-6-25-3-45 7-25 37-28 62-27l38 2"/>
        <path class="gate" d="m896 300 13 33M1003 285l13 32M842 379l14 32M658 570l16 37"/>
        <path class="gate dash" d="m950 205 11 28M993 225l11 27M1078 184l10 28M953 264l13 29M846 280l11 28M873 388l15 38M840 436l11 28M878 445l11 27M730 478l12 30M763 487l10 28M613 562l12 28"/>
      </g>
      <g transform="translate(880 340) scale(.33333)">
        <path class="curve" d="M163 810C215 798 250 760 240 735 232 710 195 705 197 675 205 640 245 618 305 613 340 613 365 600 368 580 366 565 345 565 350 550 365 525 395 519 425 517 460 515 492 500 488 470 482 450 460 450 464 425 480 390 530 350 605 343L640 343C680 348 710 350 715 320 716 300 700 295 710 280 725 264 760 264 785 252 815 225 820 200 817 180 810 155 785 145 795 120 810 95 840 82 870 80 900 80 925 98 955 97 975 93 987 75 982 60 975 35 925 30 936 5 940 0 950-4 960-5"/>
        <path class="gate" d="m592 310 13 31M633 322l14 36M700 282l11 32M729 250l14 37M736 244l13 36M472 431l13 32M392 505l13 32M169 614l13 34M252 727l14 36M88 784l14 34M951-20l13 32M903-38l12 32"/>
        <path class="gate dash" d="m836 48 11 30M868 58l13 34M775 124l11 28M825 144l12 30M778 217l10 28M957 26l12 29M996 37l11 29M507 448l11 28M337 551l11 27M347 553l11 27M301 592l10 28M220 640l11 27M205 712l10 28M43 827l11 28M51 823l12 29"/>
      </g>
      <g transform="translate(1200 60) scale(.33333)">
        <path class="curve" d="M0 835C50 833 90 820 105 785 112 750 85 755 90 725 105 700 145 700 180 690 195 680 190 665 180 655 165 645 145 640 150 620 160 590 190 570 235 566 280 563 320 590 377 619 395 615 430 590 438 570 442 545 438 530 430 515 415 490 310 480 314 445 325 405 370 385 420 387 450 392 475 395 487 370 490 350 470 345 477 325 500 295 540 300 575 293 600 275 580 255 577 240 585 220 605 217 620 219 660 225 700 255 740 253 765 245 765 230 757 215 740 185 665 190 667 165 680 145 710 155 730 163 770 173 790 170 780 140 780 100 725 65 738 45 742 32 748 30 752 27"/>
        <path class="gate" d="m637 110 11 32M686 130l11 30M800 146l12 33M763 198l13 31M518 274l11 31M461 320l13 32M502 337l14 34M371 345l12 35M391 483l13 31M211 534l12 32M112 586l13 30M172 656l14 33M142 684l12 31M88 737l12 30M568 226l11 30"/>
        <path class="gate dash" d="m721 40 12 30M763 60l12 28M769 136l10 28M731 184l14 32M601 192l12 35M559 232l11 28M406 363l10 29M430 490l15 37M262 559l10 26M154 604l13 36M134 690l11 28M53 787l11 28M87 803l11 27M801 24l3 9"/>
      </g>
      <g stroke-width="3"><path d="M375 971V958" stroke="#187a22"/><path d="m375 971 13 4" stroke="#9c1c14"/><path d="m375 971-13 5" stroke="#1c3ca8"/></g>
      <path d="m371 959 3-7 4 7z" fill="#187a22"/><path d="m385 971 7 5-8 2z" fill="#c22016"/><path d="m367 972-8 6 8 2z" fill="#1c3ca8"/>
      <g class="axis" text-anchor="middle"><text x="374" y="949" fill="#4a9a4a">Y</text><text x="392" y="982" fill="#e03a30">X</text><text x="355" y="982" fill="#2846c0">Z</text></g>
      <path d="m1096 530 16-2v17l-16 3z" fill="#3f81a8" stroke="#28556f"/><path d="M1104 527v21" stroke="#123" stroke-dasharray="5 2"/>
      <path d="M1080 513v18l4-4 4 7 4-1-3-7 5-1z" fill="#fff" stroke="#333"/>
    </g>
  </svg>

  <nav class="ribbon">
    <button>Features</button><button>Skizze</button><button>Oberflächen</button><button>Blech</button><button>Schweißkonstruktionen</button><button>Markierung</button><button>Evaluieren</button><button>SOLIDWORKS Zusatzanwendungen</button><button>Analysevorbereitung</button><button class="active">Flow Simulation</button>
  </nav>

  <div class="split">
    <aside class="panel">
      <div class="grip"><i></i></div>
      <div class="panel-tabs">
        <button class="active" aria-label="FeatureManager"><svg><use href="#part"/></svg></button>
        <button aria-label="PropertyManager"><svg><use href="#props"/></svg></button>
        <button aria-label="ConfigurationManager"><svg><use href="#config"/></svg></button>
        <button aria-label="DimXpert"><svg><use href="#target"/></svg></button>
        <button aria-label="DisplayManager"><svg><use href="#darkball"/></svg></button>
        <button aria-label="Flow Simulation"><svg><use href="#flow"/></svg></button>
        <button class="more" aria-label="Weitere"><svg viewBox="0 0 8 8"><path d="m2 1 3 3-3 3" fill="none" stroke="#333" stroke-width="1.300"/></svg></button>
      </div>
      <label class="filter"><svg><use href="#filter"/></svg><input type="text" aria-label="Filter"></label>
      <ul class="tree">
        <li class="root"><svg><use href="#part"/></svg><span>Slalom _Flow (Standard) &lt;&lt;Standard&gt;_Anzeigestatus 1&gt;</span></li>
        <li class="exp"><svg class="x"><use href="#t-exp"/></svg><span class="item"><svg><use href="#t-history"/></svg>Historie</span></li>
        <li><span class="item"><svg><use href="#t-sensor"/></svg>Sensoren</span></li>
        <li class="exp"><svg class="x"><use href="#t-exp"/></svg><span class="item"><svg><use href="#t-note"/></svg>Beschriftungen</span></li>
        <li><span class="item"><svg><use href="#t-surf"/></svg>Oberflächenkörper</span></li>
        <li class="exp"><svg class="x"><use href="#t-exp"/></svg><span class="item"><svg><use href="#t-solid"/></svg>Volumenkörper(164)</span></li>
        <li><span class="item"><svg><use href="#t-mat"/></svg>Material &lt;nicht festgelegt&gt;</span></li>
        <li><span class="item"><svg><use href="#t-plane"/></svg>Ebene vorne</span></li>
        <li><span class="item"><svg><use href="#t-plane"/></svg>Ebene oben</span></li>
        <li><span class="item"><svg><use href="#t-plane"/></svg>Ebene rechts</span></li>
        <li><span class="item"><svg><use href="#t-origin"/></svg>Ursprung</span></li>
        <li class="exp"><svg class="x"><use href="#t-exp"/></svg><span class="item"><svg><use href="#t-boss"/></svg>Aufsatz-Linear austragen1</span></li>
        <li><span class="item"><svg><use href="#t-sketch"/></svg>(-) Skizze4</span></li>
        <li class="exp"><svg class="x"><use href="#t-exp"/></svg><span class="item"><svg><use href="#t-boss"/></svg>Aufsatz-Linear austragen2</span></li>
        <li><span class="item"><svg><use href="#t-pattern"/></svg>Skizzen-Muster2</span></li>
        <li><span class="item"><svg><use href="#t-sketch"/></svg>(-) Skizze8</span></li>
        <li><span class="item"><svg><use href="#t-sketch"/></svg>(-) Skizze10</span></li>
        <li><span class="item"><svg><use href="#t-plane"/></svg>Ebene1</span></li>
        <li><span class="item"><svg><use href="#t-surfcut"/></svg>Oberflächenschnitt1</span></li>
        <li class="exp"><svg class="x"><use href="#t-exp"/></svg><span class="item"><svg><use href="#t-boss"/></svg>Linear-Austragen-Dünn1</span></li>
        <li class="exp"><svg class="x"><use href="#t-exp"/></svg><span class="item"><svg><use href="#t-boss"/></svg>Aufsatz-Linear austragen3</span></li>
        <li class="exp"><svg class="x"><use href="#t-exp"/></svg><span class="item"><svg><use href="#t-boss"/></svg>Linear-Austragen-Dünn2</span></li>
        <li class="exp"><svg class="x"><use href="#t-exp"/></svg><span class="item"><svg><use href="#t-cut"/></svg>Schnitt-Linear austragen1</span></li>
        <li class="exp"><svg class="x"><use href="#t-exp"/></svg><span class="item"><svg><use href="#t-boss"/></svg>Deckel</span></li>
        <li><span class="item"><svg><use href="#t-plane-on"/></svg>Ansicht</span></li>
        <li><span class="item"><svg><use href="#t-curve"/></svg>Kurve1</span></li>
        <li><span class="item"><svg><use href="#t-curve"/></svg>Kurve2</span></li>
        <li><span class="item"><svg><use href="#t-curve"/></svg>Kurve3</span></li>
        <li><span class="item"><svg><use href="#t-curve"/></svg>Kurve4</span></li>
        <li><span class="item"><svg><use href="#t-curve"/></svg>Kurve5</span></li>
        <li><span class="item"><svg><use href="#t-curve"/></svg>Kurve6</span></li>
        <li><span class="item selected"><svg><use href="#t-curve"/></svg>Kurve7</span></li>
        <li><span class="item"><svg><use href="#t-curve"/></svg>Kurve8</span></li>
        <li><span class="item"><svg><use href="#t-curve"/></svg>Kurve9</span></li>
        <li><span class="item"><svg><use href="#t-curve"/></svg>Kurve10</span></li>
      </ul>
      <button class="handle" aria-label="Bereich einklappen"><i></i></button>
    </aside>

    <section class="view">
      <div class="crumbs"><span class="crumb-part"><svg><use href="#part"/></svg></span><span class="crumb-item"><svg><use href="#t-curve"/></svg>Kurve7</span></div>
    </section>
  </div>

  <div class="headsup">
    <div class="hud-icons">
      <button aria-label="Zoomen auf Fenster"><svg><use href="#zoomfit"/></svg></button>
      <button aria-label="Bereich vergrößern"><svg><use href="#zoomarea"/></svg></button>
      <button aria-label="Vorherige Ansicht"><svg><use href="#prevview"/></svg></button>
      <button aria-label="Schnittansicht"><svg><use href="#section"/></svg></button>
      <button aria-label="Ausrichtung"><svg><use href="#orient"/></svg></button><button class="drop" aria-label="Mehr"><svg><use href="#arrow"/></svg></button>
      <button aria-label="Anzeigeart"><svg><use href="#display"/></svg></button><button class="drop" aria-label="Mehr"><svg><use href="#arrow"/></svg></button>
      <button aria-label="Ausblenden"><svg><use href="#eye"/></svg></button><button class="drop" aria-label="Mehr"><svg><use href="#arrow"/></svg></button>
      <button aria-label="Erscheinungsbild"><svg><use href="#appear"/></svg></button>
      <button aria-label="Bühne"><svg><use href="#scene"/></svg></button><button class="drop" aria-label="Mehr"><svg><use href="#arrow"/></svg></button>
      <button aria-label="Ansichtseinstellungen"><svg><use href="#screen"/></svg></button><button class="drop" aria-label="Mehr"><svg><use href="#arrow"/></svg></button>
    </div>
    <p>Iteration = 147</p>
  </div>

  <div class="doc-buttons">
    <button aria-label="Links"><svg><use href="#pane-l"/></svg></button>
    <button aria-label="Rechts"><svg><use href="#pane-r"/></svg></button>
    <button aria-label="Minimieren"><svg><use href="#min"/></svg></button>
    <button aria-label="Wiederherstellen"><svg><use href="#restore"/></svg></button>
    <button aria-label="Schließen"><svg><use href="#close"/></svg></button>
  </div>

  <div class="taskpane">
    <button class="active" aria-label="Ressourcen"><svg><use href="#home"/></svg></button>
    <button aria-label="Bibliothek"><svg><use href="#books"/></svg></button>
    <button aria-label="Datei-Explorer"><svg><use href="#folder"/></svg></button>
    <button aria-label="Ansichtspalette"><svg><use href="#palette"/></svg></button>
    <button aria-label="Erscheinungsbilder"><svg><use href="#ball"/></svg></button>
    <button aria-label="Eigenschaften"><svg><use href="#props"/></svg></button>
  </div>
</main>

<footer>
  <div class="sheets">
    <div class="sheet-nav">
      <button aria-label="Erste"><svg viewBox="0 0 8 8"><path d="M1 1v6M6 1v6L3 4z"/></svg></button><button aria-label="Zurück"><svg viewBox="0 0 8 8"><path d="M5 1v6L2 4z"/></svg></button><button aria-label="Vor"><svg viewBox="0 0 8 8"><path d="M3 1v6l3-3z"/></svg></button><button aria-label="Letzte"><svg viewBox="0 0 8 8"><path d="M2 1v6l3-3zM7 1v6"/></svg></button>
    </div>
    <button class="active">Modell</button><button>Bewegungsstudie 1</button>
  </div>
  <div class="status">
    <span>Slalom _Flow</span>
    <svg class="warn"><use href="#warn"/></svg>
    <button class="units">Benutzerdefiniert <svg viewBox="0 0 8 8"><path d="M1 5h6L4 2z" fill="#333"/></svg></button>
    <svg class="tag" viewBox="0 0 14 12"><path d="m1 5 5-4 7 3v5l-6 3-6-4z" fill="#ccc" stroke="#555"/><path d="m3 5 8 4M5 3l7 4" stroke="#555"/></svg>
  </div>
</footer>
</body>
</html>
```

FILE: styles.css
```css
* { box-sizing: border-box; }
body {
  margin: 0;
  height: 100vh;
  display: flex;
  flex-direction: column;
  overflow: hidden;
  background: #fff;
  color: #1e1e28;
  font: 9px/12px "Open Sans", "Noto Sans", sans-serif;
}
.sprite { position: absolute; width: 0; height: 0; }
button {
  display: flex;
  align-items: center;
  justify-content: center;
  flex: none;
  margin: 0;
  padding: 0;
  border: 0;
  background: none;
  color: inherit;
  font: inherit;
  white-space: nowrap;
}
input { min-width: 0; border: 0; padding: 0; background: none; color: inherit; font: inherit; }
svg { flex: none; }

/* title bar */
.titlebar {
  position: relative;
  display: flex;
  align-items: center;
  height: 35px;
  flex: none;
  border-top: 1px solid #c4c4c4;
  border-bottom: 1px solid #d0d0d0;
  background: #f8f8f8;
}
.logo { display: flex; align-items: center; gap: 2px; width: 106px; padding-left: 4px; color: #d9352a; font-size: 10px; font-style: italic; }
.logo svg { width: 16px; height: 16px; }
.menus { display: flex; gap: 9px; width: 242px; }
.pin { width: 20px; }
.pin svg { width: 12px; height: 12px; }
.quick { display: flex; align-items: center; height: 33px; padding-left: 12px; border-left: 1px solid #d0d0d0; }
.quick button { width: 29px; height: 31px; }
.quick svg { width: 22px; height: 22px; }
.quick svg.small { width: 19px; height: 19px; }
.quick .drop, .toolbar .drop, .hud-icons .drop { width: 14px; color: #444; }
.quick .drop svg, .toolbar .drop svg, .hud-icons .drop svg { width: 7px; height: 7px; }
.quick .drop.off { color: #aaa; }
.quick .pressed { border: 1px solid #8c8c8c; background: #bdbdbd; }
.quick .boxed { border: 1px solid #999; border-left: 0; }
.doc-title { margin: 0 0 0 304px; font-size: 9px; font-weight: 400; white-space: nowrap; }
.title-right { display: flex; align-items: center; margin-left: auto; }
.title-right button { width: 36px; }
.title-right button:last-child { justify-content: flex-end; width: 30px; padding-right: 3px; }
.title-right button svg { width: 18px; height: 18px; }
.title-right button svg.small { width: 16px; height: 16px; }
.search { display: flex; align-items: center; width: 188px; height: 17px; padding: 0 3px; gap: 4px; border: 1px solid #bbb; background: #fff; }
.search input { flex: 1; }
.search input::placeholder { color: #555; opacity: 1; }
.search svg { width: 12px; height: 12px; }
.search svg.tiny { width: 6px; height: 6px; color: #888; }
.prompt { width: 11px; height: 11px; background: #222; color: #fff; font-size: 7px; line-height: 10px; text-align: center; }

/* command toolbar */
.toolbar { display: flex; align-items: center; height: 34px; flex: none; padding: 0 0 2px 3px; border-bottom: 1px solid #999; background: #f6f6f6; }
.toolbar button { width: 28px; height: 28px; }
.toolbar .start { justify-content: flex-start; padding-left: 1px; }
.toolbar svg { width: 20px; height: 20px; }
.toolbar svg.small { width: 18px; height: 18px; }
.toolbar .drop { width: 12px; }
.sep { width: 1px; height: 28px; margin-right: 1px; background: #ccc; }
.toolbar .collapse { width: 22px; margin-left: auto; }
.toolbar .collapse svg { width: 8px; height: 8px; }

/* workspace */
.workspace { position: relative; display: flex; flex-direction: column; flex: 1; min-height: 0; border-bottom: 1px solid #aaa; }
.model { position: absolute; inset: 0; width: 100%; height: 100%; }
.face { fill: #f4f8fe; }
.edge { fill: none; stroke: #2a2422; stroke-width: 1.200; }
.edge.under { stroke: #7a4312; stroke-width: 2; }
.hot { fill: none; stroke: #e2811c; stroke-width: 1.500; }
.curve { fill: none; stroke: #68b2ea; stroke-width: 3; }
.gate { fill: none; stroke: #161616; stroke-width: 3; }
.gate.dash { stroke-dasharray: 6 5; stroke-width: 4; }
.axis { font: 9px "Liberation Sans", Arial, sans-serif; }

.ribbon {
  position: relative;
  display: grid;
  grid-template-columns: 44px 43px 60px 42px 105px 57px 53px 149px 93px 78px;
  width: max-content;
  height: 16px;
  flex: none;
}
.ribbon button { border-right: 1px solid #999; border-bottom: 1px solid #999; background: #d8d8d8; }
.ribbon .active { background: #fdfdfd; font-weight: 600; }
.split { display: flex; flex: 1; min-height: 0; }
.panel { position: relative; display: flex; flex-direction: column; width: 345px; flex: none; padding: 3px 2px 0 0; border-right: 1px solid #aaa; border-left: 1px solid #bbb; background: #f6f6f6; }
.grip { display: flex; align-items: center; justify-content: center; height: 12px; border-top: 1px solid #bbb; border-bottom: 1px solid #ccc; }
.grip i, .handle i { width: 4px; height: 4px; border: 1px solid #aaa; border-radius: 50%; background: #ddd; }
.panel-tabs { display: flex; height: 29px; margin-top: 3px; }
.panel-tabs button { width: 39px; border: 1px solid #aaa; border-left: 0; background: #d8d8d8; }
.panel-tabs .active { background: #f8f8f8; border-bottom-color: #f8f8f8; }
.panel-tabs svg { width: 20px; height: 20px; }
.panel-tabs .more { width: 16px; margin-left: auto; border: 0; background: none; }
.panel-tabs .more svg { width: 10px; height: 10px; }
.filter { display: flex; align-items: center; height: 19px; margin: 0 2px; padding-left: 2px; border: 1px solid #ccc; }
.filter svg { width: 13px; height: 13px; }
.filter input { flex: 1; }
.tree { display: grid; grid-auto-rows: 1fr; height: 577px; margin: 0; padding: 0; list-style: none; border-bottom: 2px solid #3f8fc8; }
.tree li { display: flex; align-items: center; padding-left: 16px; white-space: nowrap; }
.tree li.exp { padding-left: 3px; }
.tree .root { padding-left: 2px; gap: 3px; }
.tree svg { width: 14px; height: 14px; }
.tree .x { width: 7px; height: 7px; margin-right: 6px; }
.item { display: flex; align-items: center; gap: 3px; height: 16px; padding: 0 1px; border: 1px solid transparent; }
.item.selected { border-color: #4795cb; background: #a5c9e8; }
.handle { position: absolute; left: 100%; top: 442px; width: 7px; height: 29px; border: 1px solid #aaa; border-left: 0; background: #f6f6f6; }

.view { flex: 1; min-width: 0; padding: 13px 10px; }
.crumbs { position: relative; display: flex; width: max-content; height: 18px; border: 1px solid #ccc; }
.crumb-part { display: flex; align-items: center; width: 24px; padding-left: 9px; background: #f6f6f6; }
.crumb-item { display: flex; align-items: center; gap: 3px; padding: 0 8px; background: #c6dcf1; clip-path: polygon(0 0, 100% 0, 100% 100%, 0 100%, 6px 50%); }
.crumbs svg { width: 14px; height: 14px; }

.headsup { position: absolute; top: 1px; left: 957px; }
.hud-icons { display: flex; }
.hud-icons button { width: 28px; height: 28px; }
.hud-icons svg { width: 21px; height: 21px; }
.hud-icons .drop { width: 12px; color: #999; }
.headsup p { margin: 3px 0 0 -2px; color: #111; font: 9px/12px "Liberation Sans", Arial, sans-serif; }
.doc-buttons { position: absolute; top: 6px; right: 2px; display: flex; color: #999; }
.doc-buttons button { width: 28px; height: 18px; }
.doc-buttons svg { width: 16px; height: 16px; }
.taskpane { position: absolute; top: 47px; right: 0; width: 25px; border: 1px solid #aaa; border-right: 0; }
.taskpane button { justify-content: flex-start; width: 24px; height: 27px; padding-left: 3px; overflow: hidden; border-bottom: 1px solid #aaa; background: #d8d8d8; }
.taskpane button:last-child { height: 25px; border-bottom: 0; }
.taskpane .active { height: 26px; background: #f8f8f8; }
.taskpane svg { width: 21px; height: 21px; }

/* sheet tabs and status line */
footer { flex: none; background: #f6f6f6; }
.sheets { display: flex; height: 12px; border-bottom: 1px solid #aaa; }
.sheets button { width: 99px; border-right: 1px solid #aaa; background: #d8d8d8; line-height: 11px; }
.sheets .active { width: 45px; background: #fdfdfd; font-weight: 700; }
.sheet-nav { display: flex; width: 50px; background: #aaa; }
.sheets .sheet-nav button { width: 12px; background: #aaa; border-right: 1px solid #8c8c8c; }
.sheet-nav svg { width: 7px; height: 7px; fill: #888; stroke: #888; }
.status { display: flex; align-items: center; height: 13px; padding-left: 1px; }
.warn { width: 13px; height: 11px; margin-left: auto; }
.units { margin-left: 60px; }
.units svg { width: 7px; height: 7px; margin-left: 13px; }
.tag { width: 14px; height: 12px; margin: 0 -4px 0 18px; }
```
